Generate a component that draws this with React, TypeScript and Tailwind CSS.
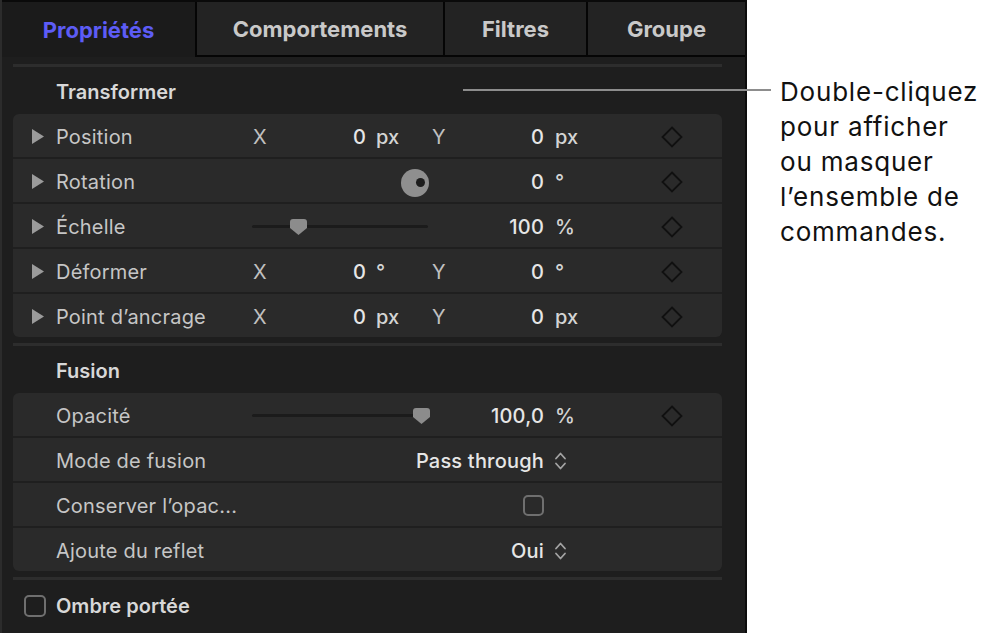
import React from "react";

const sans = "font-['Inter','Noto_Sans',sans-serif]";

function Triangle() {
  return (
    <svg width="12" height="15" viewBox="0 0 12 15">
      <polygon points="0,0 12,7.5 0,15" fill="#9b9b9b" />
    </svg>
  );
}

function Diamond() {
  return (
    <svg width="22" height="22" viewBox="0 0 22 22">
      <polygon points="11,1.5 20.5,11 11,20.5 1.5,11" fill="none" stroke="#101010" strokeWidth="1.8" />
    </svg>
  );
}

function Chevrons() {
  return (
    <svg width="13" height="20" viewBox="0 0 13 20">
      <polyline points="2,7.5 6.5,2.5 11,7.5" fill="none" stroke="#a3a3a3" strokeWidth="1.8" strokeLinecap="round" strokeLinejoin="round" />
      <polyline points="2,12.5 6.5,17.5 11,12.5" fill="none" stroke="#a3a3a3" strokeWidth="1.8" strokeLinecap="round" strokeLinejoin="round" />
    </svg>
  );
}

function Thumb() {
  return (
    <svg width="17" height="16" viewBox="0 0 17 16">
      <path d="M3 0 H14 Q17 0 17 3 V9 L8.5 16 L0 9 V3 Q0 0 3 0 Z" fill="#8c8c8c" />
    </svg>
  );
}

function Slider({ pos }: { pos: number }) {
  return (
    <div className="w-[176px] flex items-center">
      <div className="relative w-full h-[3px] rounded-full bg-[#1b1b1b]">
        <div className="absolute top-[-6px]" style={{ left: pos - 8.5 }}>
          <Thumb />
        </div>
      </div>
    </div>
  );
}

function Lead({ arrow }: { arrow?: boolean }) {
  return (
    <div className="w-[43px] shrink-0 pl-[19px] flex items-center">
      {arrow ? <Triangle /> : null}
    </div>
  );
}

function Label({ children, w = "w-[197px]" }: { children: React.ReactNode; w?: string }) {
  return (
    <div className={`${w} shrink-0 text-[20px] tracking-[0.2px] text-[#c6c6c6] whitespace-nowrap`}>
      {children}
    </div>
  );
}

function Value({ children, w }: { children: React.ReactNode; w: string }) {
  return (
    <div className={`${w} shrink-0 text-right text-[20px] font-medium tracking-[0.2px] text-[#e6e6e6]`}>
      {children}
    </div>
  );
}

function Unit({ children, w }: { children: React.ReactNode; w: string }) {
  return <div className={`${w} shrink-0 text-[20px] font-medium text-[#d4d4d4]`}>{children}</div>;
}

function Axis({ children }: { children: React.ReactNode }) {
  return <div className="w-[40px] shrink-0 text-[20px] text-[#c0c0c0]">{children}</div>;
}

function Row({ children }: { children: React.ReactNode }) {
  return <div className="h-[43px] pt-[2px] flex items-center bg-[#2a2a2a]">{children}</div>;
}

function XYRow({ label, unit }: { label: string; unit: string }) {
  return (
    <Row>
      <Lead arrow />
      <Label w="w-[197px]">{label}</Label>
      <Axis>X</Axis>
      <Value w="w-[73px]">0</Value>
      <Unit w="w-[66px] pl-[10px]">{unit}</Unit>
      <Axis>Y</Axis>
      <Value w="w-[72px]">0</Value>
      <Unit w="w-[117px] pl-[11px]">{unit}</Unit>
      <Diamond />
    </Row>
  );
}

function Separator() {
  return <div className="mt-[6px] h-[3px] bg-[#2d2d2d]" />;
}

function Heading({ children }: { children: React.ReactNode }) {
  return (
    <div className="h-[47px] pt-[2px] flex items-center pl-[43px] text-[20px] font-semibold text-[#d8d8d8]">
      {children}
    </div>
  );
}

function Tab({ label, active }: { label: string; active?: boolean }) {
  const base = "h-full flex items-center justify-center pt-[1px] text-[22px] font-bold";
  if (active) {
    return <div className={`${base} w-[193px] shrink-0 bg-[#1b1b1b] text-[#5d5cf6]`}>{label}</div>;
  }
  return (
    <div className={`${base} flex-1 bg-[#232323] text-[#c9c9c9] border-l-2 border-b-2 border-[#050505]`}>
      {label}
    </div>
  );
}

export default function App() {
  return (
    <div className={`w-[995px] h-[633px] bg-white flex overflow-hidden relative ${sans}`}>
      {/* inspector panel */}
      <div className="w-[747px] h-[633px] shrink-0 bg-[#1e1e1e] border-l-2 border-[#2c2c2c] border-r-2 border-r-[#0c0c0c] flex flex-col">
        <div className="h-[57px] flex border-t-2 border-[#0a0a0a]">
          <Tab label="Propriétés" active />
          <div className="w-[248px] flex">
            <Tab label="Comportements" />
          </div>
          <div className="w-[143px] flex">
            <Tab label="Filtres" />
          </div>
          <div className="flex-1 flex">
            <Tab label="Groupe" />
          </div>
        </div>

        <div className="pl-[11px] w-[720px]">
          <div className="mt-[7px] h-[3px] bg-[#2d2d2d]" />
          <Heading>Transformer</Heading>

          <div className="rounded-[6px] overflow-hidden flex flex-col gap-[2px] bg-[#1f1f1f]">
            <XYRow label="Position" unit="px" />
            <Row>
              <Lead arrow />
              <Label>Rotation</Label>
              <div className="w-[148px] shrink-0" />
              <div className="relative w-[28px] h-[28px] rounded-full bg-[#8f8f8f] shrink-0 mt-[2px]">
                <div className="absolute left-[15px] top-[9px] w-[9px] h-[9px] rounded-full bg-[#1d1d1d]" />
              </div>
              <Value w="w-[115px]">0</Value>
              <Unit w="w-[117px] pl-[11px]">°</Unit>
              <Diamond />
            </Row>
            <Row>
              <Lead arrow />
              <Label w="w-[196px]">Échelle</Label>
              <Slider pos={46} />
              <Value w="w-[116px]">100</Value>
              <Unit w="w-[117px] pl-[11px]">%</Unit>
              <Diamond />
            </Row>
            <XYRow label="Déformer" unit="°" />
            <XYRow label="Point d’ancrage" unit="px" />
          </div>

          <Separator />
          <Heading>Fusion</Heading>

          <div className="rounded-[6px] overflow-hidden flex flex-col gap-[2px] bg-[#1f1f1f]">
            <Row>
              <Lead />
              <Label w="w-[196px]">Opacité</Label>
              <Slider pos={169} />
              <Value w="w-[116px]">100,0</Value>
              <Unit w="w-[117px] pl-[11px]">%</Unit>
              <Diamond />
            </Row>
            <Row>
              <Lead />
              <Label>Mode de fusion</Label>
              <Value w="w-[291px]">Pass through</Value>
              <div className="ml-[10px] flex items-center">
                <Chevrons />
              </div>
            </Row>
            <Row>
              <Lead />
              <Label>Conserver l’opac...</Label>
              <div className="w-[291px] shrink-0 flex justify-end">
                <div className="w-[21px] h-[21px] rounded-[5px] border-2 border-[#6f6f6f]" />
              </div>
            </Row>
            <Row>
              <Lead />
              <Label>Ajoute du reflet</Label>
              <Value w="w-[291px]">Oui</Value>
              <div className="ml-[10px] flex items-center">
                <Chevrons />
              </div>
            </Row>
          </div>

          <Separator />
          <div className="h-[50px] pt-[2px] flex items-center pl-[11px] gap-[10px]">
            <div className="w-[22px] h-[22px] rounded-[5px] border-2 border-[#6f6f6f]" />
            <div className="text-[20px] font-semibold text-[#d8d8d8]">Ombre portée</div>
          </div>
        </div>
      </div>

      {/* callout */}
      <div className="pl-[33px] pt-[74px] text-[26px] leading-[35px] text-[#111] tracking-[0.8px]">
        <div>Double-cliquez</div>
        <div>pour afficher</div>
        <div>ou masquer</div>
        <div>l’ensemble de</div>
        <div>commandes.</div>
      </div>
      <div className="absolute left-[463px] top-[89px] w-[308px] h-[2px] bg-[#8d8d8d]" />
    </div>
  );
}
